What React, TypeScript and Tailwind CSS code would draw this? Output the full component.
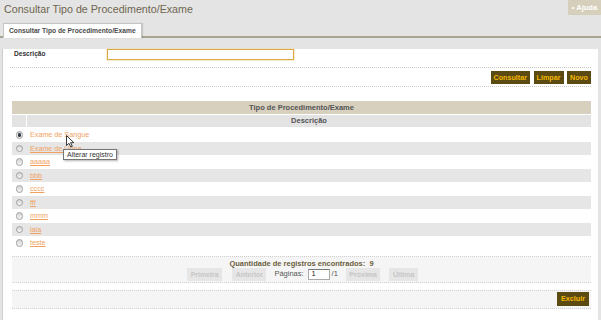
import React from "react";

const rows = ["Exame de Sangue", "Exame de Urina", "aaaaa", "bbb", "cccc", "fff", "mmm", "lala", "teste"];

const ActionButton: React.FC<{ label: string }> = ({ label }) => (
  <div className="flex h-[13px] items-center bg-[#5b4b12] px-[3px] text-[7.2px] font-bold leading-none text-[#f3b700]">
    {label}
  </div>
);

const PagerButton: React.FC<{ label: string; className?: string }> = ({ label, className }) => (
  <div
    className={
      "flex h-[13px] items-center bg-[#e6e6e6] px-[3.5px] text-[7px] font-bold leading-none text-[#c6c6c6] " +
      (className ?? "")
    }
  >
    {label}
  </div>
);

const Radio: React.FC<{ checked?: boolean }> = ({ checked }) => (
  <div className="flex h-[7.5px] w-[7.5px] items-center justify-center rounded-full border border-[#a0a0a0] bg-gradient-to-b from-[#d4d4d4] to-[#f6f6f6]">
    {checked && <div className="h-[3.5px] w-[3.5px] rounded-full bg-[#2d3642]" />}
  </div>
);

export default function App() {
  return (
    <div className="relative h-[320px] w-[601px] overflow-hidden bg-[#e4e4e4] font-['Liberation_Sans',Arial,sans-serif]">
      {/* header */}
      <div className="flex h-[23px] items-start justify-between">
        <div className="pl-[4px] pt-[3px] text-[10.7px] leading-[13px] text-[#6e6650]">
          Consultar Tipo de Procedimento/Exame
        </div>
        <div className="flex h-[15px] w-[33px] items-center justify-center bg-[#d6cfbb] text-[7.5px] font-bold leading-none text-white">
          • Ajuda
        </div>
      </div>

      {/* tabs */}
      <div className="flex h-[15px] items-end border-b-2 border-[#aaa590] pl-[3px]">
        <div className="-mb-[2px] flex h-[15px] w-[139px] items-center border border-b-0 border-[#c4c4c4] bg-white pl-[5px] text-[6.7px] font-bold leading-none text-[#4a4a4a] shadow-[1px_0_1px_rgba(0,0,0,0.12)]">
          Consultar Tipo de Procedimento/Exame
        </div>
      </div>

      {/* panel */}
      <div className="ml-[2px] mr-[3px] h-[279px] border-b-2 border-l border-[#b5b09c] border-l-[#cfcfcf] bg-white">
        <div className="mb-[7px] mt-[11px] flex h-[11px] items-center">
          <div className="w-[104px] pl-[11px] text-[6.6px] font-bold leading-none text-[#333]">Descrição</div>
          <div className="h-[11px] w-[187px] border border-[#dcaa45] bg-white shadow-[0_0_0_0.5px_#f0d9a8]" />
        </div>
        <div className="mx-[7px] border-t border-dotted border-[#c8c8c8]" />

        <div className="mr-[7px] mt-[3px] flex justify-end gap-[3.5px]">
          <ActionButton label="Consultar" />
          <ActionButton label="Limpar" />
          <ActionButton label="Novo" />
        </div>
        <div className="mx-[7px] mt-[2px] border-t border-dotted border-[#c8c8c8]" />

        {/* table */}
        <div className="ml-[9px] mr-[7px] mt-[14px]">
          <div className="flex h-[14px] items-center justify-center border-b border-white bg-[#d7d0bf] text-[7.5px] font-bold leading-none text-[#555]">
            Tipo de Procedimento/Exame
          </div>
          <div className="flex h-[13px] border-b border-white">
            <div className="w-[15px] border-r border-white bg-[#e3e3e3]" />
            <div className="flex flex-1 items-center justify-center bg-[#e3e3e3] text-[7.5px] font-bold leading-none text-[#555]">
              Descrição
            </div>
          </div>
          {rows.map((r, i) => (
            <div key={r} className={"flex h-[13.5px] items-center " + (i % 2 === 1 ? "bg-[#e6e6e6]" : "bg-white")}>
              <div className="flex w-[15px] justify-center">
                <Radio checked={i === 0} />
              </div>
              <div
                className={
                  "pl-[3px] text-[7.2px] leading-none text-[#f0a262] " +
                  (i === 0 ? "" : "underline underline-offset-[1px]")
                }
              >
                {r}
              </div>
            </div>
          ))}
        </div>

        {/* pager */}
        <div className="ml-[9px] mr-[7px] mt-[6px] h-[27px] border-y border-dotted border-[#d0d0d0] bg-[#f5f5f5] pt-[2px]">
          <div className="text-center text-[7.5px] font-bold leading-[9px] text-[#6b5f3e]">
            Quantidade de registros encontrados:&nbsp;&nbsp;9
          </div>
          <div className="flex h-[13px] items-center justify-center pl-[2px]">
            <PagerButton label="Primeira" />
            <PagerButton label="Anterior" className="ml-[10px]" />
            <div className="ml-[8px] text-[7.5px] leading-none text-[#555]">Páginas:</div>
            <div className="ml-[4px] flex h-[11px] w-[22px] items-center border border-[#aaa] border-t-[#777] bg-white pl-[3px] text-[7.5px] leading-none text-[#222]">
              1
            </div>
            <div className="ml-[2px] text-[7.5px] leading-none text-[#555]">/1</div>
            <PagerButton label="Próxima" className="ml-[8px]" />
            <PagerButton label="Última" className="ml-[9px]" />
          </div>
        </div>

        <div className="ml-[9px] mr-[7px] mt-[7px] flex h-[19px] items-center justify-end border-y border-dotted border-[#d0d0d0] bg-[#f5f5f5] pr-[2px]">
          <div className="flex h-[14px] items-center bg-[#5b4b12] px-[4px] text-[7.2px] font-bold leading-none text-[#f3b700]">
            Excluir
          </div>
        </div>
      </div>

      {/* tooltip */}
      <div className="absolute left-[63px] top-[149px] flex h-[11px] items-center border border-[#767676] bg-white px-[3px] text-[7px] leading-none text-[#333] shadow-[1px_1px_2px_rgba(0,0,0,0.3)]">
        Alterar registro
      </div>
      {/* cursor */}
      <svg className="absolute left-[66px] top-[135px]" width="9" height="13" viewBox="0 0 9 13">
        <path d="M0.5 0.5 L0.5 10.5 L3 8.3 L4.8 12 L6.3 11.3 L4.6 7.7 L7.8 7.7 Z" fill="white" stroke="#222" strokeWidth="0.9" />
      </svg>
    </div>
  );
}
